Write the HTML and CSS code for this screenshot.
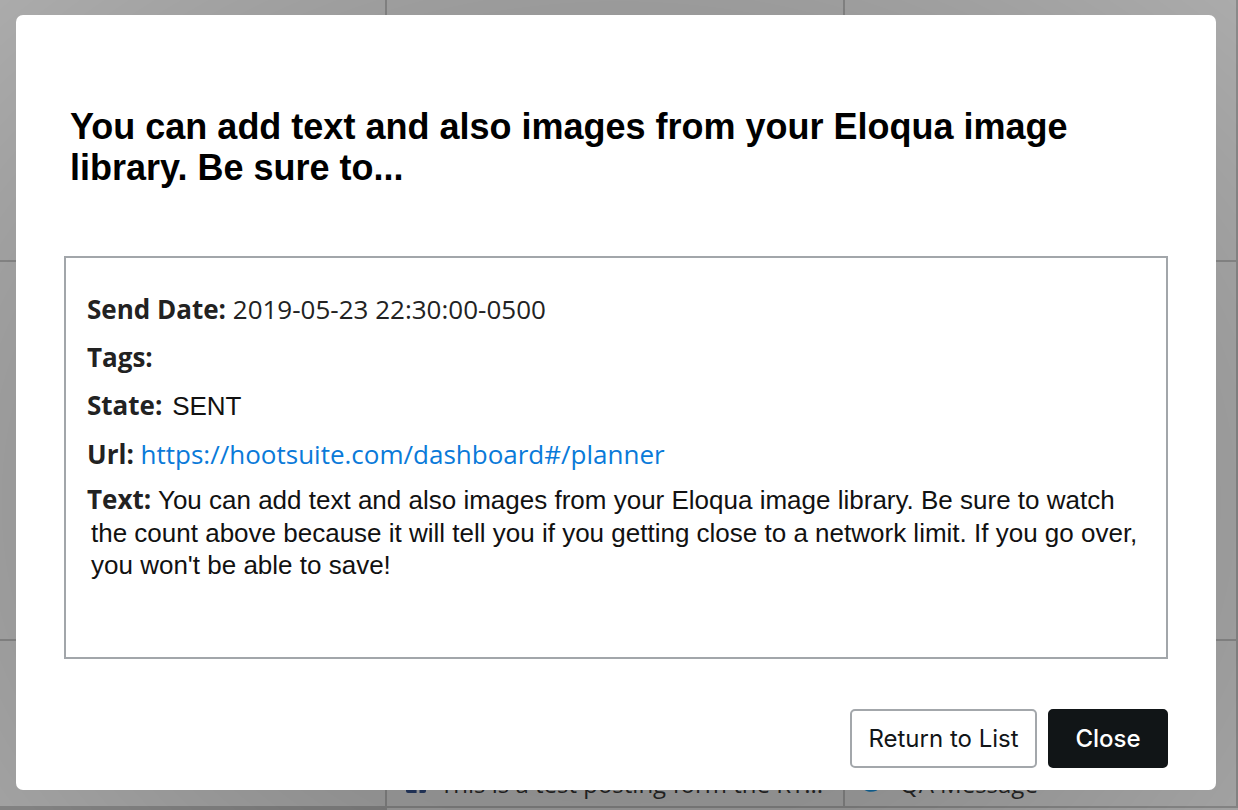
FILE: index.html
```html
<!DOCTYPE html>
<html lang="en">
<head>
<meta charset="utf-8">
<title>Message details</title>
<link rel="stylesheet" href="styles.css">
</head>
<body>
<div class="page">
  <div class="grid">
    <div class="cell"></div>
    <div class="cell"></div>
    <div class="cell"></div>
    <div class="cell"></div>
    <div class="cell"></div>
    <div class="cell"></div>
    <div class="cell"></div>
    <div class="cell post">
      <svg class="net-icon" viewBox="0 0 20 20" width="20" height="20"><rect x="0" y="0" width="20" height="20" rx="2" fill="#3b5998"/><path d="M13.5 20v-7h2.4l.4-2.8h-2.8V8.4c0-.8.2-1.4 1.4-1.4h1.5V4.5c-.3 0-1.1-.1-2.2-.1-2.2 0-3.6 1.3-3.6 3.7v2.1H8.2V13h2.4v7z" fill="#fff"/></svg>
      <span>This is a test posting form the RT...</span>
    </div>
    <div class="cell post">
      <svg class="net-icon" viewBox="0 0 24 20" width="22" height="20"><path d="M24 2.4c-.9.4-1.8.7-2.8.8 1-.6 1.8-1.6 2.2-2.7-1 .6-2 1-3.1 1.2C19.4.7 18.1.1 16.7.1c-2.7 0-4.9 2.2-4.9 4.9 0 .4 0 .8.1 1.1C7.8 5.9 4.2 4 1.7 1 1.3 1.7 1 2.6 1 3.5c0 1.7.9 3.2 2.2 4.1-.8 0-1.6-.2-2.2-.6v.1c0 2.4 1.7 4.4 3.9 4.8-.4.1-.8.2-1.3.2-.3 0-.6 0-.9-.1.6 2 2.4 3.4 4.6 3.4-1.7 1.3-3.8 2.1-6.1 2.1-.4 0-.8 0-1.2-.1 2.2 1.4 4.8 2.2 7.5 2.2 9.1 0 14-7.5 14-14v-.6c1-.7 1.8-1.6 2.5-2.6z" fill="#1da1f2"/></svg>
      <span>QA Message</span>
    </div>
    <div class="cell"></div>
  </div>
</div>
<div class="overlay"></div>
<div class="modal" role="dialog">
  <h2 class="modal-title">You can add text and also images from your Eloqua image library. Be sure to...</h2>
  <div class="details">
    <p class="row"><b class="label">Send Date:</b> <span class="value">2019-05-23 22:30:00-0500</span></p>
    <p class="row"><b class="label">Tags:</b></p>
    <p class="row"><b class="label">State:</b> <span class="state">SENT</span></p>
    <p class="row"><b class="label">Url:</b> <a class="link" href="#">https://hootsuite.com/dashboard#/planner</a></p>
    <p class="row text-row"><b class="label">Text:</b> <span class="body">You can add text and also images from your Eloqua image library. Be sure to watch</span><span class="body cont">the count above because it will tell you if you getting close to a network limit. If you go over,</span><span class="body cont">you won't be able to save!</span></p>
  </div>
  <div class="actions">
    <button class="btn btn-secondary" type="button">Return to List</button>
    <button class="btn btn-primary" type="button">Close</button>
  </div>
</div>
</body>
</html>
```

FILE: styles.css
```css
html, body {
  margin: 0;
  padding: 0;
  width: 1238px;
  height: 810px;
  overflow: hidden;
  background: #ffffff;
  font-family: "Open Sans", "Liberation Sans", sans-serif;
}

.page {
  width: 1238px;
  height: 810px;
}

.grid {
  display: grid;
  grid-template-columns: 387px 458px 1fr;
  grid-template-rows: 262px 379px 1fr;
  height: 100%;
}

.cell {
  border-right: 2px solid #cfcfcf;
  border-bottom: 2px solid #cfcfcf;
}

.post {
  display: flex;
  align-items: flex-end;
  gap: 14px;
  padding: 0 0 6px 19px;
  font-size: 24px;
  color: #3a3a3a;
  white-space: nowrap;
  overflow: hidden;
}

.post .net-icon {
  flex: none;
  margin-bottom: 7px;
}

.overlay {
  position: fixed;
  inset: 0;
  background: radial-gradient(ellipse at 50% 62%, rgba(0, 0, 0, 0.48) 0%, rgba(0, 0, 0, 0.44) 50%, rgba(0, 0, 0, 0.33) 100%);
}

.modal {
  position: fixed;
  top: 15px;
  left: 16px;
  width: 1200px;
  height: 775px;
  box-sizing: border-box;
  padding: 91px 48px 0 48px;
  background: #ffffff;
  border-radius: 7px;
  display: flex;
  flex-direction: column;
}

.modal-title {
  margin: 0;
  padding-left: 6px;
  font-family: "Liberation Sans", Arial, sans-serif;
  font-weight: 700;
  font-size: 36px;
  line-height: 41px;
  color: #000000;
}

.details {
  margin-top: 68px;
  height: 403px;
  box-sizing: border-box;
  border: 2px solid #a2a6aa;
  padding: 33px 21px 0 21px;
}

.row {
  margin: 0 0 12px 0;
  font-size: 26px;
  line-height: 36px;
  color: #222222;
}

.label {
  font-family: "Open Sans", sans-serif;
  font-weight: 700;
  color: #222222;
}

.value {
  font-weight: 400;
  color: #222222;
}

.state {
  font-family: "Liberation Sans", Arial, sans-serif;
  font-size: 26px;
  color: #111111;
  margin-left: 3px;
}

.link {
  color: #0a7ad9;
  text-decoration: none;
}

.text-row {
  margin-top: -1px;
  line-height: 32.5px;
}

.body {
  font-family: "Liberation Sans", Arial, sans-serif;
  font-size: 26px;
  color: #111111;
}

.cont {
  display: block;
  padding-left: 4px;
}

.actions {
  margin-top: 50px;
  display: flex;
  justify-content: flex-end;
  gap: 11px;
}

.btn {
  height: 59px;
  box-sizing: border-box;
  border-radius: 5px;
  font-family: "Inter", "Liberation Sans", sans-serif;
  font-size: 24px;
  cursor: pointer;
}

.btn-secondary {
  width: 187px;
  background: #ffffff;
  border: 2px solid #a3a7ab;
  color: #111517;
}

.btn-primary {
  width: 120px;
  background: #111517;
  border: 2px solid #111517;
  color: #ffffff;
  font-weight: 500;
}
```
